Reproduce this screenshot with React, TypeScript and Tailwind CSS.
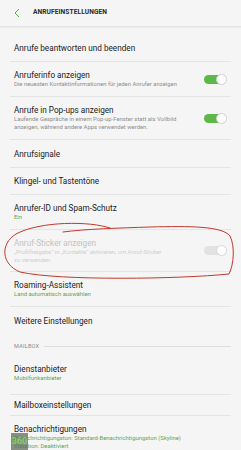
import React from "react";

function Toggle({ on, disabled }: { on?: boolean; disabled?: boolean }) {
  return (
    <div className="relative w-[23px] h-[11px] shrink-0 mr-[14px]">
      <div
        className={
          "absolute left-0 top-[1px] w-[22px] h-[9px] rounded-full " +
          (disabled ? "bg-[#e2e2e2]" : "bg-[#5cb848]")
        }
      />
      <div
        className={
          "absolute right-0 top-0 w-[11px] h-[11px] rounded-full bg-white border " +
          (disabled ? "border-[#d6d6d6]" : "border-[#cfcfcf]")
        }
      />
    </div>
  );
}

function Divider() {
  return <div className="mx-[10px] h-px bg-[#e4e4e4]" />;
}

function Row({
  title,
  sub,
  subGreen,
  toggle,
  disabled,
  h,
  extra = "",
}: {
  title: string;
  sub?: React.ReactNode;
  subGreen?: boolean;
  toggle?: boolean;
  disabled?: boolean;
  h: string;
  extra?: string;
}) {
  return (
    <div className={"flex items-center " + h + " " + extra}>
      <div className="flex-1 pl-[14px] pr-[6px] flex flex-col">
        <div
          className={
            "text-[8.2px] leading-[10px] " +
            (disabled ? "text-[#c3c3c3]" : "text-[#222222]")
          }
        >
          {title}
        </div>
        {sub && (
          <div
            className={
              "text-[5.9px] leading-[8px] whitespace-nowrap " +
              (disabled
                ? "text-[#cfcfcf]"
                : subGreen
                ? "text-[#62a64f]"
                : "text-[#8e8e8e]")
            }
          >
            {sub}
          </div>
        )}
      </div>
      {toggle !== undefined && <Toggle on={toggle} disabled={disabled} />}
    </div>
  );
}

export default function App() {
  return (
    <div
      className="relative w-[241px] h-[450px] overflow-hidden bg-[#f5f5f5]"
      style={{ fontFamily: "Roboto, 'Noto Sans', sans-serif" }}
    >
      {/* Header */}
      <div className="h-[27px] flex items-center border-b border-[#e6e6e6] shadow-[0_1px_1px_rgba(0,0,0,0.04)]">
        <svg width="8" height="10" viewBox="0 0 8 10" className="ml-[13px]">
          <path d="M6 1 L2 5 L6 9" fill="none" stroke="#5aa64a" strokeWidth="1" />
        </svg>
        <div className="ml-[12px] text-[6.6px] font-bold tracking-[0.1px] text-[#2a2a2a]">
          ANRUFEINSTELLUNGEN
        </div>
      </div>

      <Row title="Anrufe beantworten und beenden" h="h-[34px]" extra="pt-[8px]" />
      <Divider />
      <Row
        title="Anruferinfo anzeigen"
        sub="Die neuesten Kontaktinformationen für jeden Anrufer anzeigen"
        toggle
        h="h-[34px]"
      />
      <Divider />
      <Row
        title="Anrufe in Pop-ups anzeigen"
        sub={
          <>
            Laufende Gespräche in einem Pop-up-Fenster statt als Vollbild
            <br />
            anzeigen, während andere Apps verwendet werden.
          </>
        }
        toggle
        h="h-[42px]"
      />
      <Divider />
      <Row title="Anrufsignale" h="h-[27px]" />
      <Divider />
      <Row title="Klingel- und Tastentöne" h="h-[26px]" />
      <Divider />
      <Row title="Anrufer-ID und Spam-Schutz" sub="Ein" subGreen h="h-[34px]" />
      <Divider />
      <Row
        title="Anruf-Sticker anzeigen"
        sub={
          <>
            „Profilfreigabe“ in „Kontakte“ aktivieren, um Anruf-Sticker
            <br />
            zu verwenden.
          </>
        }
        toggle={false}
        disabled
        h="h-[41px]"
      />
      <Divider />
      <Row
        title="Roaming-Assistent"
        sub="Land automatisch auswählen"
        subGreen
        h="h-[34px]"
      />
      <Divider />
      <Row title="Weitere Einstellungen" h="h-[27px]" />

      {/* Section header */}
      <div className="h-[24px] flex items-center pl-[14px] pr-[10px] pt-[1px]">
        <div className="text-[5.6px] text-[#8a8a8a] tracking-[0.2px]">MAILBOX</div>
        <div className="flex-1 h-px bg-[#dedede] ml-[5px]" />
      </div>

      <Row
        title="Dienstanbieter"
        sub="Mobilfunkanbieter"
        subGreen
        h="h-[36px]"
        extra="pb-[7px]"
      />
      <Divider />
      <Row title="Mailboxeinstellungen" h="h-[20px]" />
      <Divider />
      <Row
        title="Benachrichtigungen"
        sub={
          <>
            Benachrichtigungston: Standard-Benachrichtigungston (Skyline)
            <br />
            Vibration: Deaktiviert
          </>
        }
        subGreen
        h="h-[36px]"
        extra="pt-[6px]"
      />

      {/* Red hand-drawn circle */}
      <svg
        className="absolute left-0 top-0 pointer-events-none"
        width="241"
        height="450"
        viewBox="0 0 241 450"
      >
        <path
          d="M110 228 C 90 221, 40 221, 16 234 C 0 244, 1 264, 20 272 C 60 281, 180 279, 229 274 C 234 264, 235 246, 230 236 C 222 226, 190 226, 150 227 C 120 228, 85 229, 63 232"
          fill="none"
          stroke="#c0392b"
          strokeWidth="1"
          strokeLinecap="round"
        />
      </svg>

      {/* Watermark */}
      <div className="absolute left-[11px] top-[433px] w-[17px] h-[17px] bg-[#5f6e5a]/75 flex items-center justify-center">
        <span className="text-[9px] font-bold text-[#7ccf66] leading-none">360</span>
      </div>
    </div>
  );
}
